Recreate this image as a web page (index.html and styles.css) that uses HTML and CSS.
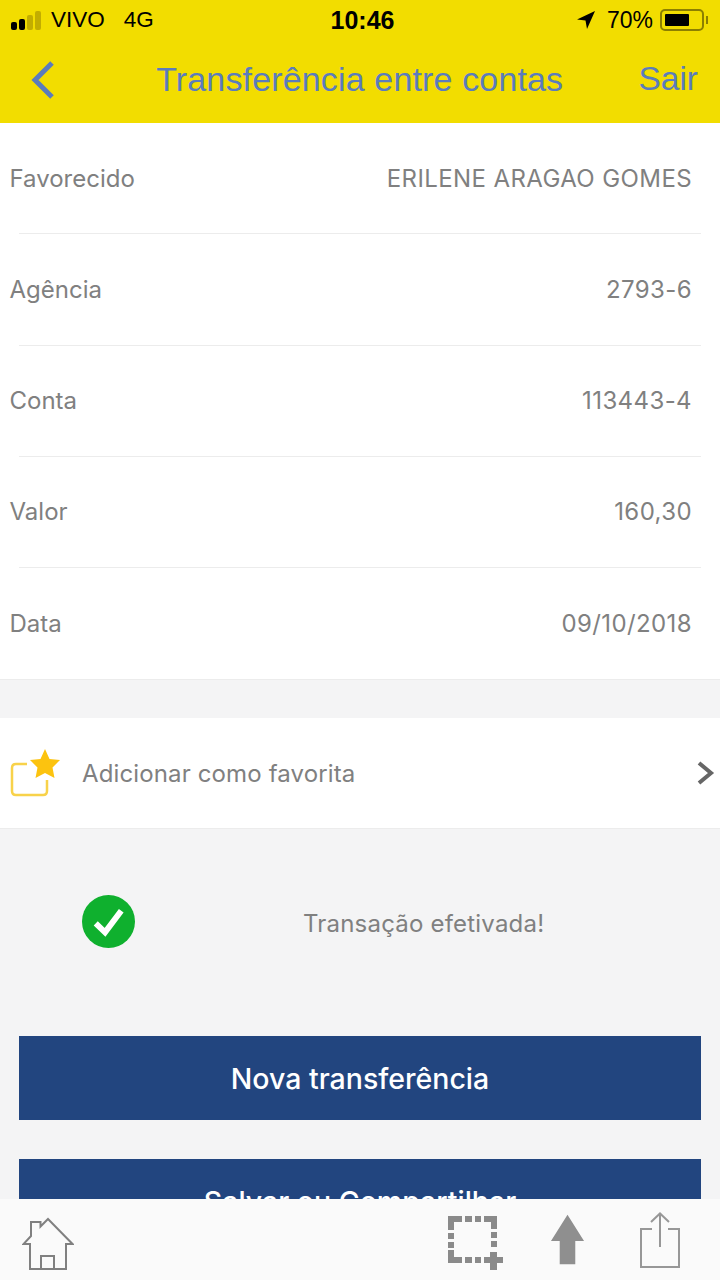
FILE: index.html
```html
<!DOCTYPE html>
<html lang="pt-BR">

<head>
    <meta charset="UTF-8">
    <meta name="viewport" content="width=device-width, initial-scale=1.0">
    <title>Transferência entre contas</title>
    <link rel="stylesheet" href="styles.css">
</head>

<body>
    <div class="phone">
        <header class="top">
            <div class="status-bar">
                <div class="status-left">
                    <span class="signal">
                        <i class="dot on"></i><i class="dot on"></i><i class="dot"></i><i class="dot"></i>
                    </span>
                    <span class="carrier">VIVO</span>
                    <span class="network">4G</span>
                </div>
                <div class="clock">10:46</div>
                <div class="status-right">
                    <svg class="location" width="20" height="20" viewBox="0 0 20 20">
                        <path d="M19 1 L1 9.5 L9.5 10.5 L11 19 Z" fill="#000" />
                    </svg>
                    <span class="battery-text">70%</span>
                    <span class="battery"><span class="battery-fill"></span></span>
                    <span class="battery-tip"></span>
                </div>
            </div>
            <div class="nav-bar">
                <svg class="back" width="26" height="40" viewBox="0 0 26 40">
                    <path d="M22 3 L5 20 L22 37" fill="none" stroke="#5b7cbc" stroke-width="5" />
                </svg>
                <h1 class="nav-title">Transferência entre contas</h1>
                <a class="nav-exit">Sair</a>
            </div>
        </header>

        <main class="content">
            <section class="details">
                <div class="row first">
                    <span class="label">Favorecido</span>
                    <span class="value">ERILENE ARAGAO GOMES</span>
                </div>
                <div class="row">
                    <span class="label">Agência</span>
                    <span class="value">2793-6</span>
                </div>
                <div class="row">
                    <span class="label">Conta</span>
                    <span class="value">113443-4</span>
                </div>
                <div class="row">
                    <span class="label">Valor</span>
                    <span class="value">160,30</span>
                </div>
                <div class="row last">
                    <span class="label">Data</span>
                    <span class="value">09/10/2018</span>
                </div>
            </section>

            <section class="favorite">
                <svg class="fav-icon" width="52" height="52" viewBox="0 0 52 52">
                    <path d="M17 17 H6 Q2 17 2 21 V44 Q2 48 6 48 H33 Q37 48 37 44 V33" fill="none" stroke="#f8d24a" stroke-width="2.5" />
                    <path d="M35 2 L39.5 12 L50 13 L42.5 20.500 L44.500 31 L35 26 L25.500 31 L27.500 20.500 L20 13 L30.500 12 Z" fill="#fcc30f" />
                </svg>
                <span class="fav-text">Adicionar como favorita</span>
                <svg class="chevron" width="20" height="26" viewBox="0 0 20 26">
                    <path d="M3 3 L15 13 L3 23" fill="none" stroke="#666" stroke-width="4" />
                </svg>
            </section>

            <section class="result">
                <svg class="check" width="53" height="55" viewBox="0 0 54 56">
                    <circle cx="27" cy="28" r="27" fill="#0fb02e" />
                    <path d="M14 30 L23.500 39 L40 17" fill="none" stroke="#fff" stroke-width="6" />
                </svg>
                <span class="result-text">Transação efetivada!</span>
            </section>

            <div class="actions">
                <button type="button" class="btn">Nova transferência</button>
                <button type="button" class="btn">Salvar ou Compartilhar</button>
            </div>
        </main>

        <footer class="toolbar">
            <svg class="tool-home" width="52" height="54" viewBox="0 0 52 54">
                <path d="M26 2 L50.500 27 H44 V52 H8 V27 H1.500 L9 19 V5 H18.500 V9.500 Z M19 52 V39 H32 V52" fill="none" stroke="#808080" stroke-width="2" />
            </svg>
            <div class="tool-group">
                <svg class="tool-crop" width="56" height="54" viewBox="0 0 56 54" fill="#8a8a8a">
                    <rect x="0" y="0" width="14" height="6" />
                    <rect x="0" y="0" width="6" height="14" />
                    <rect x="36" y="0" width="13" height="6" />
                    <rect x="43" y="0" width="6" height="13" />
                    <rect x="0" y="34" width="6" height="13" />
                    <rect x="0" y="41" width="14" height="6" />
                    <rect x="17" y="0" width="7" height="6" />
                    <rect x="27" y="0" width="6" height="6" />
                    <rect x="0" y="17" width="6" height="6" />
                    <rect x="0" y="26" width="6" height="6" />
                    <rect x="43" y="16" width="6" height="6" />
                    <rect x="43" y="25" width="6" height="6" />
                    <rect x="17" y="41" width="7" height="6" />
                    <rect x="27" y="41" width="6" height="6" />
                    <rect x="42" y="36" width="7" height="18" />
                    <rect x="36" y="41" width="19" height="6" />
                </svg>
                <svg class="tool-up" width="35" height="52" viewBox="0 0 36 52">
                    <path d="M18 0 L35 27 H26 V51 H10 V27 H1 Z" fill="#8f8f8f" />
                </svg>
                <svg class="tool-share" width="42" height="56" viewBox="0 0 42 56">
                    <path d="M13 17 H2 V55 H40 V17 H29" fill="none" stroke="#979797" stroke-width="2" />
                    <path d="M21 35 V2 M12 10 L21 1.500 L30 10" fill="none" stroke="#979797" stroke-width="2" />
                </svg>
            </div>
        </footer>
    </div>
</body>

</html>
```

FILE: styles.css
```css
* {
    box-sizing: border-box;
    margin: 0px;
    padding: 0px;
}

body {
    width: 720px;
    height: 1280px;
    overflow: hidden;
    font-family: Inter, "Liberation Sans", sans-serif;
    background-color: #f4f4f5;
}

.phone {
    display: flex;
    flex-direction: column;
    height: 1280px;
}

/* topo amarelo */
.top {
    height: 123px;
    flex-shrink: 0;
    background-color: #f2dd00;
    font-family: "Liberation Sans", Arial, sans-serif;
}

.status-bar {
    display: grid;
    grid-template-columns: 1fr auto 1fr;
    align-items: center;
    height: 40px;
    padding: 0px 12px 0px 11px;
    color: #000;
    font-size: 23px;
}

.status-left {
    display: flex;
    align-items: center;
}

.signal {
    display: flex;
    align-items: flex-end;
    gap: 2px;
    width: 40px;
}

.dot {
    display: block;
    width: 6px;
    border-radius: 2px;
    background-color: #c2ad00;
}

.dot.on {
    background-color: #000;
}

.dot:nth-child(1) {
    height: 8px;
}

.dot:nth-child(2) {
    height: 11px;
}

.dot:nth-child(3) {
    height: 15px;
}

.dot:nth-child(4) {
    height: 19px;
}

.carrier {
    font-size: 22.5px;
}

.network {
    margin-left: 19px;
    font-size: 22.5px;
}

.clock {
    font-weight: bold;
    font-size: 25px;
    margin-left: 6px;
}

.status-right {
    display: flex;
    align-items: center;
    justify-content: flex-end;
}

.location {
    margin-right: 11px;
}

.battery-text {
    margin-right: 7px;
}

.battery {
    display: block;
    width: 44px;
    height: 22px;
    padding: 3px;
    border: 2px solid #8c7f00;
    border-radius: 5px;
}

.battery-fill {
    display: block;
    width: 70%;
    height: 100%;
    background-color: #000;
    border-radius: 1px;
}

.battery-tip {
    display: block;
    width: 2px;
    height: 8px;
    margin-left: 2px;
    background-color: #8c7f00;
}

.nav-bar {
    display: flex;
    align-items: center;
    height: 78px;
    padding: 0px 22px 0px 30px;
    color: #5b7cbc;
}

.back {
    flex-shrink: 0;
    margin-top: 2px;
}

.nav-title {
    flex: 1;
    font-size: 34px;
    font-weight: normal;
    letter-spacing: 0.15px;
    text-align: center;
    margin-left: 25px;
}

.nav-exit {
    font-size: 33.5px;
}

/* dados da transferencia */
.content {
    flex: 1;
    min-height: 0;
    overflow: hidden;
    color: #808080;
    font-size: 24px;
}

.details {
    background-color: #fff;
    border-bottom: 1px solid #ececec;
}

.row {
    display: flex;
    justify-content: space-between;
    align-items: center;
    height: 111.25px;
    margin-left: 19px;
    margin-right: 19px;
    padding-right: 9px;
    border-bottom: 1px solid #ececec;
}

.row .label {
    margin-left: -9.5px;
}

.row .value {
    letter-spacing: 0.4px;
}

.row.last {
    border-bottom: none;
}

.favorite {
    display: flex;
    align-items: center;
    height: 111px;
    margin-top: 38px;
    padding-left: 10px;
    background-color: #fff;
    border-bottom: 1px solid #ececec;
}

.fav-icon {
    flex-shrink: 0;
}

.fav-text {
    flex: 1;
    margin-left: 20px;
    letter-spacing: 0.13px;
}

.chevron {
    margin-right: 4px;
}

.result {
    display: flex;
    align-items: center;
    height: 186px;
    padding-left: 82px;
    padding-bottom: 1px;
}

.result-text {
    margin-left: 168px;
    margin-top: 3px;
    letter-spacing: 0.2px;
}

.actions {
    display: flex;
    flex-direction: column;
    gap: 39px;
    padding: 21px 19px 0px;
}

.btn {
    flex-shrink: 0;
    height: 84px;
    padding-top: 1px;
    border: none;
    background-color: #22457f;
    color: #fff;
    font-family: Inter, "Liberation Sans", sans-serif;
    font-size: 28.5px;
    font-weight: 500;
}

/* barra inferior */
.toolbar {
    display: flex;
    justify-content: space-between;
    align-items: flex-start;
    height: 81px;
    flex-shrink: 0;
    padding: 13px 39px 0px 22px;
    background-color: #fafafa;
}

.tool-home {
    margin-top: 5px;
}

.tool-group {
    display: flex;
    align-items: flex-start;
}

.tool-crop {
    margin-top: 4px;
}

.tool-up {
    margin-top: 2px;
    margin-left: 46px;
}

.tool-share {
    margin-left: 54px;
}
```
